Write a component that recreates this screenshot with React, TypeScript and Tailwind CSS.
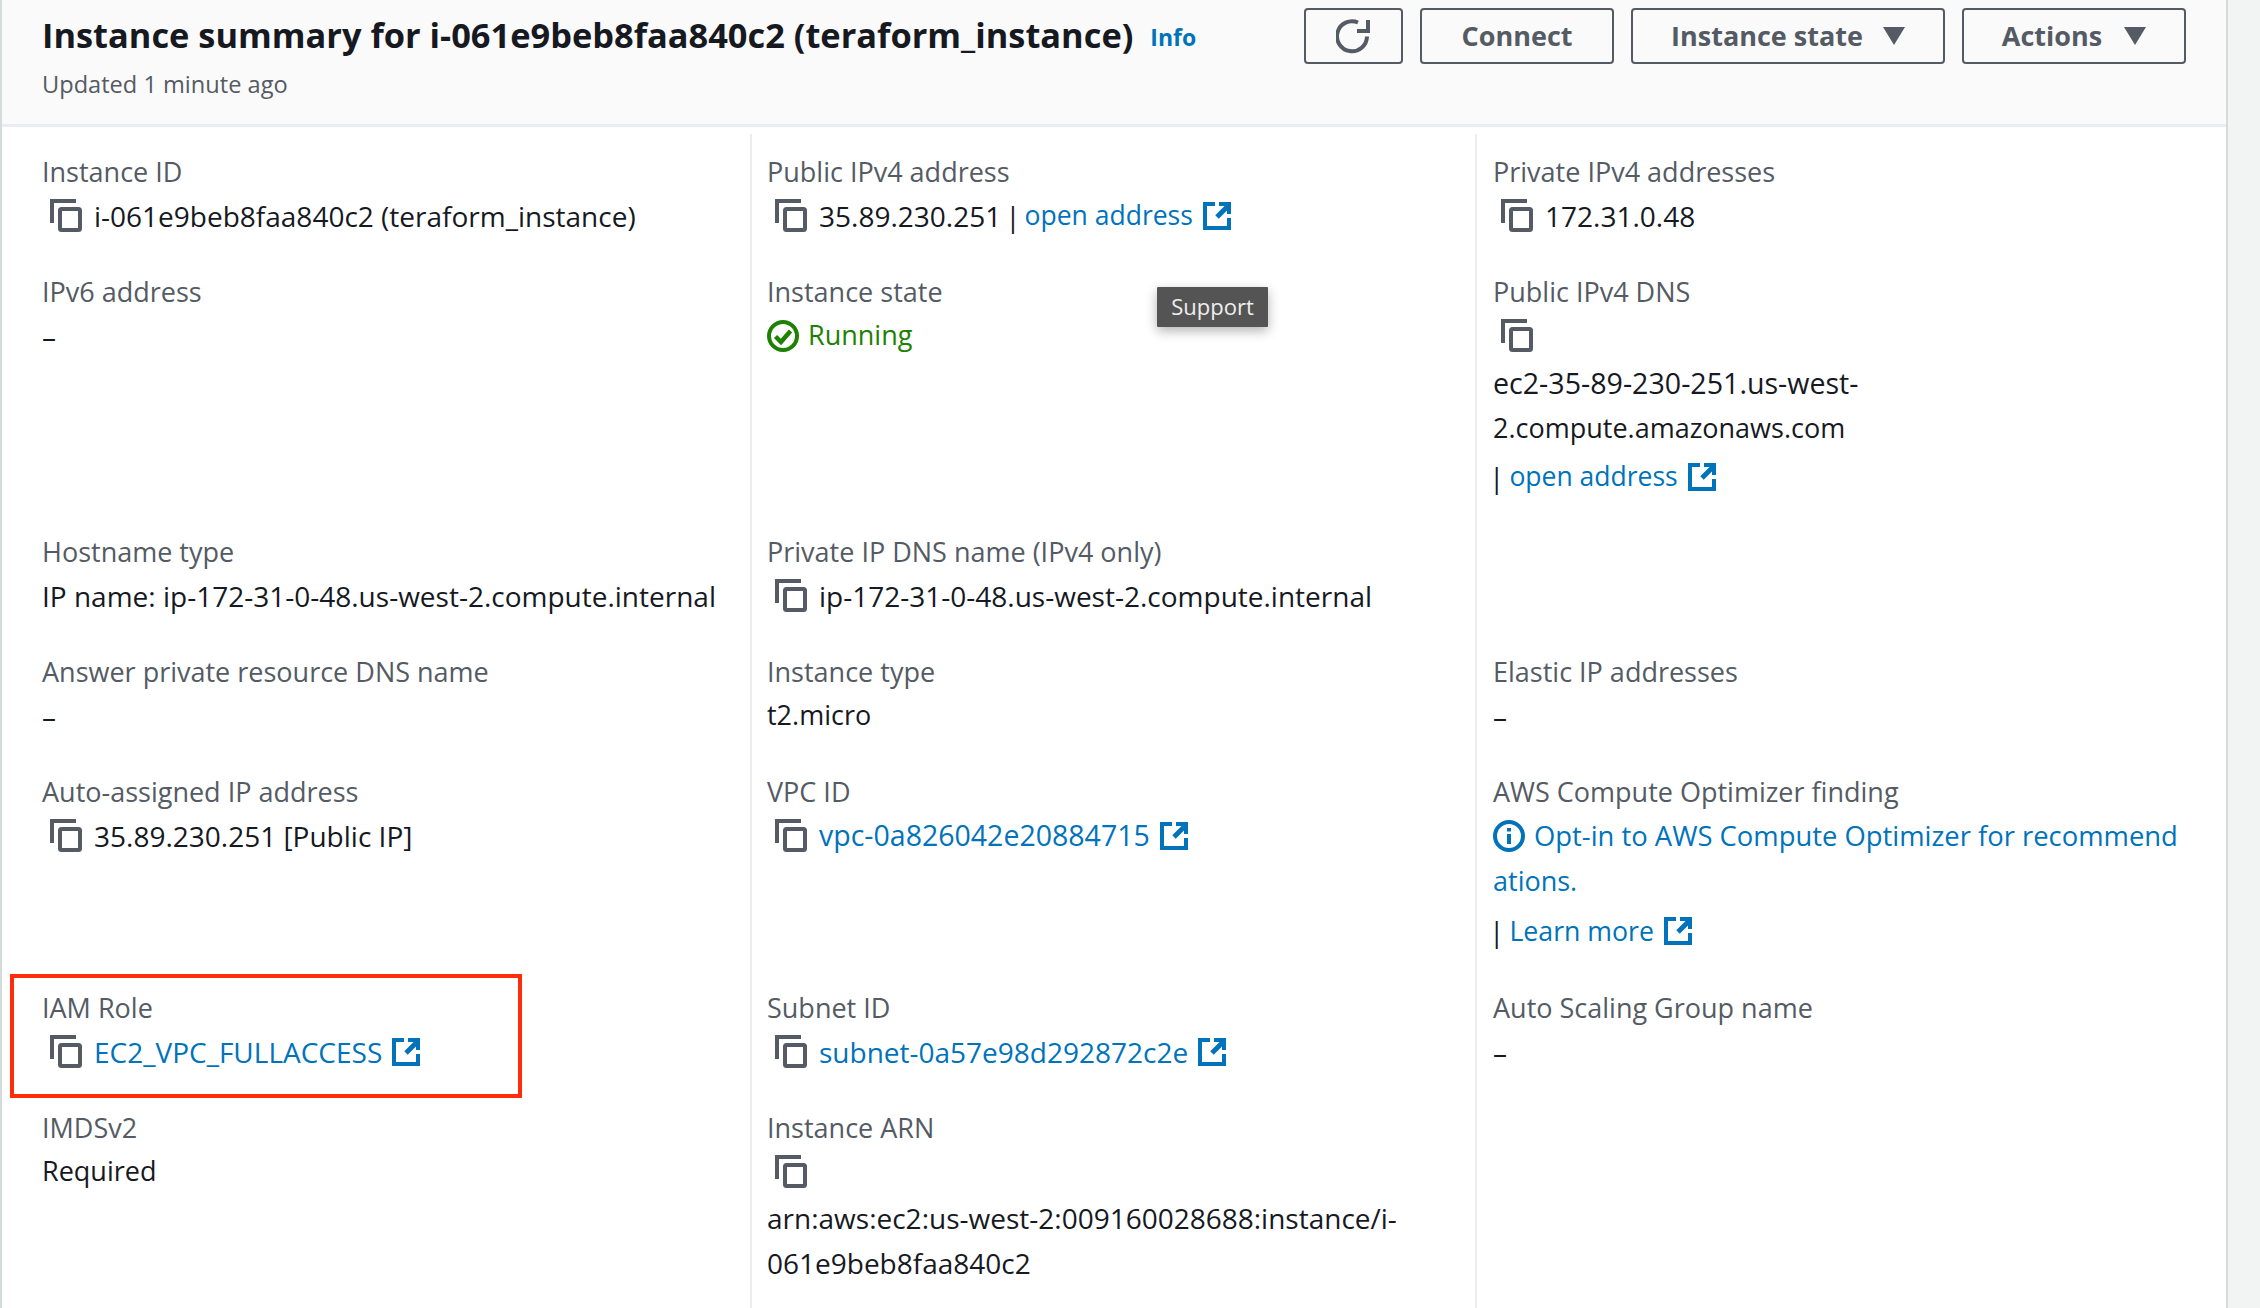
import React from 'react';

const CopyIcon = () => (
  <svg className="mr-[12px] ml-2 shrink-0" width="32" height="33" viewBox="0 0 32 33" fill="none" stroke="#545b64" strokeWidth="4">
    <path d="M2 24V2H26" />
    <rect x="10" y="10" width="20" height="21" rx="1.5" />
  </svg>
);

const ExternalIcon = () => (
  <svg className="ml-[10px] inline-block shrink-0" width="28" height="28" viewBox="0 0 28 28" fill="none" stroke="#0073bb" strokeWidth="4">
    <path d="M12 2H2V26H26V16" />
    <path d="M14 15L25 4" strokeWidth="5" />
    <path d="M16 2H26V12" />
  </svg>
);

const CheckCircle = () => (
  <svg className="mr-[9px] shrink-0" width="32" height="32" viewBox="0 0 32 32" fill="none" stroke="#1d8102">
    <circle cx="16" cy="16" r="14" strokeWidth="4" />
    <path d="M8.5 16.5L14 22L23.5 11" strokeWidth="4.5" />
  </svg>
);

const InfoCircle = () => (
  <svg className="mr-[9px] shrink-0" width="32" height="32" viewBox="0 0 32 32" fill="none" stroke="#0073bb">
    <circle cx="16" cy="16" r="14" strokeWidth="4" />
    <path d="M16 14V24" strokeWidth="4" />
    <path d="M16 8V11.5" strokeWidth="4" />
  </svg>
);

const Caret = () => (
  <svg width="22" height="18" viewBox="0 0 22 18" fill="#545b64">
    <path d="M0 0H22L11 18Z" />
  </svg>
);

const Label = ({ children }: { children: React.ReactNode }) => (
  <div className="h-[44px] text-[27px] leading-[44px] text-[#545b64]">{children}</div>
);

const Line = ({ children }: { children: React.ReactNode }) => (
  <div className="flex h-[45px] items-center whitespace-nowrap pb-[2px] text-[#16191f]">{children}</div>
);

const Link = ({ children }: { children: React.ReactNode }) => <span className="text-[#0073bb]">{children}</span>;

const Dash = () => <Line>–</Line>;

const Cell = ({ label, children, column, first }: { label: string; children: React.ReactNode; column: number; first?: boolean }) => {
  const cellClass = column === 0 ? 'pl-[40px]' : column === 1 ? 'border-l-2 border-[#eaeded] pl-[15px]' : 'border-l-2 border-[#eaeded] pl-[16px]';
  return (
    <div className={`${cellClass} ${first ? 'pt-[16px]' : ''} pb-[31px]`}>
      <Label>{label}</Label>
      {children}
    </div>
  );
};

export default function App() {
  return (
    <div className="flex h-[1308px] w-[2260px] overflow-hidden bg-[#f2f3f3] text-[28px] [font-family:'Open_Sans',sans-serif]">
      <div className="relative h-full w-[2228px] border-r-2 border-l-2 border-[#d5dbdb] bg-white">
        <div className="flex h-[127px] justify-between border-b-[3px] border-[#eaeded] bg-[#fafafa] pt-2 pr-[40px] pl-[40px]">
          <div>
            <div className="flex h-[55px] items-center whitespace-nowrap">
              <h1 className="-mt-[2px] text-[34.4px] font-bold text-[#16191f]">Instance summary for i-061e9beb8faa840c2 (teraform_instance)</h1>
              <a className="mt-1 ml-[17px] text-[23px] font-bold text-[#0073bb]">Info</a>
            </div>
            <div className="mt-1 text-[23.6px] text-[#545b64]">Updated 1 minute ago</div>
          </div>
          <div className="flex h-[56px] gap-[17px] text-[27px] font-bold text-[#545b64]">
            <button className="flex w-[99px] items-center justify-center rounded-[4px] border-2 border-[#545b64]">
              <svg width="36" height="36" viewBox="0 0 36 36" fill="none" stroke="#545b64" strokeWidth="4">
                <path d="M31 18.5A15 15 0 1 1 22 4.5" />
                <path d="M32 2V13H21" />
              </svg>
            </button>
            <button className="w-[194px] rounded-[4px] border-2 border-[#545b64]">Connect</button>
            <button className="flex w-[314px] items-center justify-center gap-[20px] rounded-[4px] border-2 border-[#545b64]">
              Instance state
              <Caret />
            </button>
            <button className="flex w-[224px] items-center justify-center gap-[22px] rounded-[4px] border-2 border-[#545b64]">
              Actions
              <Caret />
            </button>
          </div>
        </div>

        <div className="mt-[7px] grid grid-cols-[748px_725px_1fr]">
          <Cell label="Instance ID" column={0} first>
            <Line><CopyIcon />i-061e9beb8faa840c2 (teraform_instance)</Line>
          </Cell>
          <Cell label="Public IPv4 address" column={1} first>
            <Line>
              <CopyIcon />35.89.230.251
              <span className="mx-1">|</span>
              <span className="text-[26.5px]"><Link>open address</Link></span>
              <ExternalIcon />
            </Line>
          </Cell>
          <Cell label="Private IPv4 addresses" column={2} first>
            <Line><CopyIcon />172.31.0.48</Line>
          </Cell>

          <Cell label="IPv6 address" column={0}><Dash /></Cell>
          <Cell label="Instance state" column={1}>
            <Line><CheckCircle /><span className="text-[27px] text-[#1d8102]">Running</span></Line>
          </Cell>
          <Cell label="Public IPv4 DNS" column={2}>
            <Line><CopyIcon /></Line>
            <div className="h-[47px] text-[28.6px] leading-[47px] text-[#16191f]">ec2-35-89-230-251.us-west-</div>
            <div className="h-[43px] text-[27px] leading-[43px] text-[#16191f]">2.compute.amazonaws.com</div>
            <div className="mt-[5px] flex h-[45px] items-center text-[#16191f]">
              <span className="mr-[5px] -ml-1">|</span>
              <span className="text-[26.5px]"><Link>open address</Link></span>
              <ExternalIcon />
            </div>
          </Cell>

          <Cell label="Hostname type" column={0}>
            <Line>IP name: ip-172-31-0-48.us-west-2.compute.internal</Line>
          </Cell>
          <Cell label="Private IP DNS name (IPv4 only)" column={1}>
            <Line><CopyIcon />ip-172-31-0-48.us-west-2.compute.internal</Line>
          </Cell>
          <div className="border-l-2 border-[#eaeded]" />

          <Cell label="Answer private resource DNS name" column={0}><Dash /></Cell>
          <Cell label="Instance type" column={1}><Line><span className="text-[27px]">t2.micro</span></Line></Cell>
          <Cell label="Elastic IP addresses" column={2}><Dash /></Cell>

          <Cell label="Auto-assigned IP address" column={0}>
            <Line><CopyIcon />35.89.230.251 [Public IP]</Line>
          </Cell>
          <Cell label="VPC ID" column={1}>
            <Line><CopyIcon /><span className="text-[28.5px]"><Link>vpc-0a826042e20884715</Link></span><ExternalIcon /></Line>
          </Cell>
          <Cell label="AWS Compute Optimizer finding" column={2}>
            <Line><InfoCircle /><span className="text-[27.4px]"><Link>Opt-in to AWS Compute Optimizer for recommend</Link></span></Line>
            <div className="h-[43px] text-[27px] leading-[43px]"><Link>ations.</Link></div>
            <div className="mt-[5px] flex h-[48px] items-center text-[#16191f]">
              <span className="mr-[5px] -ml-1">|</span>
              <span className="text-[26.7px]"><Link>Learn more</Link></span>
              <ExternalIcon />
            </div>
          </Cell>

          <div className="relative">
            <div className="absolute top-[-12px] left-[8px] h-[124px] w-[512px] border-4 border-[#ff2d0a]" />
            <Cell label="IAM Role" column={0}>
              <Line><CopyIcon /><Link>EC2_VPC_FULLACCESS</Link><ExternalIcon /></Line>
            </Cell>
          </div>
          <Cell label="Subnet ID" column={1}>
            <Line><CopyIcon /><Link>subnet-0a57e98d292872c2e</Link><ExternalIcon /></Line>
          </Cell>
          <Cell label="Auto Scaling Group name" column={2}><Dash /></Cell>

          <Cell label="IMDSv2" column={0}><Line><span className="text-[27px]">Required</span></Line></Cell>
          <Cell label="Instance ARN" column={1}>
            <Line><CopyIcon /></Line>
            <div className="h-[47px] leading-[47px] text-[#16191f]">arn:aws:ec2:us-west-2:009160028688:instance/i-</div>
            <div className="h-[43px] leading-[43px] text-[#16191f]">061e9beb8faa840c2</div>
          </Cell>
          <div className="border-l-2 border-[#eaeded]" />
        </div>

        <div className="absolute top-[287px] left-[1155px] flex h-[40px] w-[111px] items-center justify-center rounded-[1px] bg-[#545454] pb-[2px] text-[22px] text-[#eeeeee] shadow-[0_4px_12px_rgba(0,0,0,0.3)]">
          Support
        </div>
      </div>
    </div>
  );
}
